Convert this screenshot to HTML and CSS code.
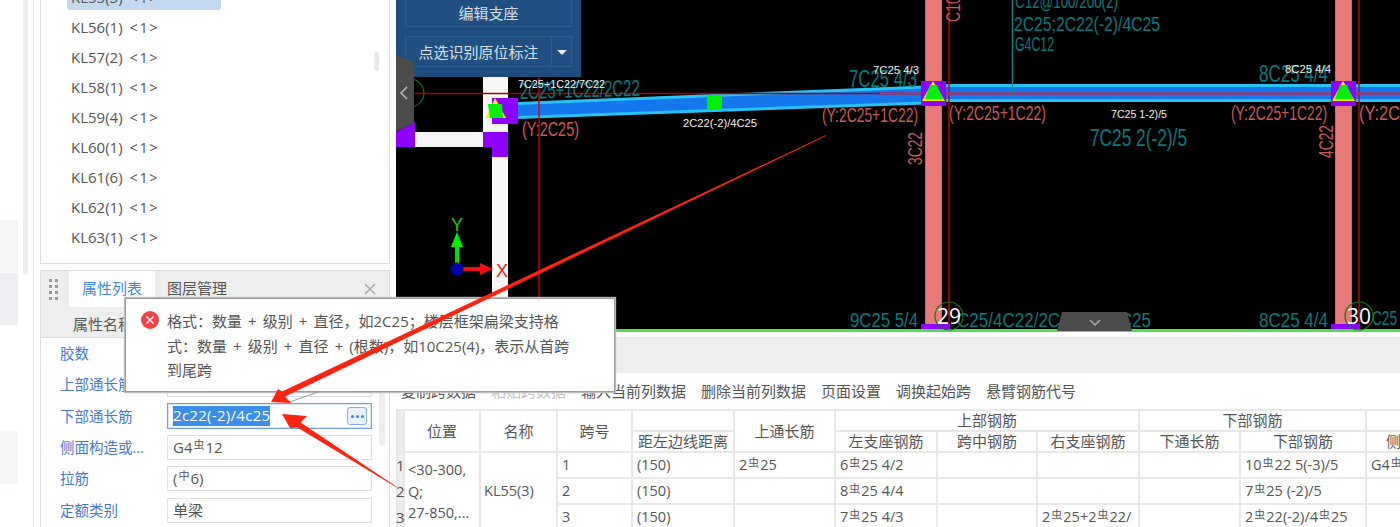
FILE: index.html
```html
<!DOCTYPE html>
<html lang="zh">
<head>
<meta charset="utf-8">
<title>KL55</title>
<link rel="stylesheet" href="styles.css">
</head>
<body>
<div class="app">
  <aside class="gutter">
    <div class="gutter-scroll"></div>
    <div class="gutter-blocks">
      <div class="gb gb-a"></div>
      <div class="gb gb-b"></div>
      <div class="gb gb-gap"></div>
      <div class="gb gb-a"></div>
    </div>
  </aside>

  <section class="side">
    <div class="list-panel">
      <ul class="list">
        <li class="sel">KL55(3) <span class="ct">&lt;1&gt;</span></li>
        <li>KL56(1) <span class="ct">&lt;1&gt;</span></li>
        <li>KL57(2) <span class="ct">&lt;1&gt;</span></li>
        <li>KL58(1) <span class="ct">&lt;1&gt;</span></li>
        <li>KL59(4) <span class="ct">&lt;1&gt;</span></li>
        <li>KL60(1) <span class="ct">&lt;1&gt;</span></li>
        <li>KL61(6) <span class="ct">&lt;1&gt;</span></li>
        <li>KL62(1) <span class="ct">&lt;1&gt;</span></li>
        <li>KL63(1) <span class="ct">&lt;1&gt;</span></li>
        <li>KL64(1) <span class="ct">&lt;1&gt;</span></li>
      </ul>
      <div class="list-thumb"></div>
    </div>
    <div class="prop-panel">
      <div class="tabs">
        <div class="grip"><i></i><i></i><i></i><i></i><i></i><i></i><i></i><i></i></div>
        <div class="tab active">属性列表</div>
        <div class="tab second">图层管理</div>
        <svg class="close" viewBox="0 0 12 12" width="12" height="12"><path d="M1 1L11 11M11 1L1 11"/></svg>
      </div>
      <div class="prop-head">属性名称</div>
      <div class="prop-rows">
        <div class="prop-row"><span class="pl">胶数</span><span class="pv">2</span></div>
        <div class="prop-row"><span class="pl">上部通长筋</span><span class="pv">2<b class="rb">虫</b>25</span></div>
        <div class="prop-row"><span class="pl">下部通长筋</span><span class="pv focus"><span class="selected">2c22(-2)/4c25</span><span class="more"><i></i><i></i><i></i></span></span></div>
        <div class="prop-row"><span class="pl">侧面构造或...</span><span class="pv">G4<b class="rb">虫</b>12</span></div>
        <div class="prop-row"><span class="pl">拉筋</span><span class="pv">(<b class="rb">中</b>6)</span></div>
        <div class="prop-row"><span class="pl">定额类别</span><span class="pv">单梁</span></div>
      </div>
      <div class="prop-thumb"></div>
    </div>
  </section>

  <main class="main">
    <div class="canvas">
      <svg class="cad" viewBox="396 0 1004 332" width="1004" height="332">
        <!-- white walls -->
        <rect class="wall" x="483" y="70" width="25" height="70"/>
        <rect class="wall" x="415" y="132" width="75" height="15"/>
        <rect class="wall" x="492" y="140" width="16" height="192"/>
        <path class="purple" d="M396 132L415 122V147H396ZM483 132H508V157H492V147H483Z"/>
        <circle class="ring" cx="410" cy="93" r="14"/>
        <!-- columns -->
        <rect class="col" x="925.5" y="-2" width="16" height="336"/>
        <rect class="col" x="1335.5" y="-2" width="16" height="336"/>
        <!-- beam -->
        <path class="cyan" d="M518 102L925 85.5V104.5L518 119ZM925 84H1400V102H925Z"/>
        <path class="blue" d="M518 105L925 88.5V101.5L518 116ZM925 87H1400V99H925Z"/>
        <path class="redline" d="M415 93.5H1400"/>
        <path class="redv" d="M539 70V332M949 0V332M1359 0V332"/>
        <path class="redbeam" d="M880 93.5H1400"/>
        <path class="tealv" d="M1012.5 0V93"/>
        <rect class="green" x="707" y="95" width="15" height="15"/>
        <!-- nodes -->
        <rect class="purple" x="492" y="98" width="26" height="26"/>
        <path class="yellow" d="M495 98L486 118H506Z"/>
        <path class="green" d="M488 104H502L503 118H490Z"/>
        <rect class="purple" x="921" y="81" width="25" height="25"/>
        <path class="yellow" d="M933 81L922 101H945Z"/>
        <path class="green" d="M930 85H937L943 99H925Z"/>
        <rect class="purple" x="1331" y="81" width="25" height="25"/>
        <path class="yellow" d="M1343 81L1332 101H1355Z"/>
        <path class="green" d="M1340 85H1347L1353 99H1335Z"/>
        <!-- teal annotations -->
        <g class="teal">
          <text x="520" y="99" font-size="23" textLength="120" lengthAdjust="spacingAndGlyphs" transform="rotate(-1.5 520 99)">2C25+1C22/2C22</text>
          <text x="849" y="87" font-size="23" textLength="68" lengthAdjust="spacingAndGlyphs">7C25 4/3</text>
          <text x="1015" y="8" font-size="20" textLength="103" lengthAdjust="spacingAndGlyphs">C12@100/200(2)</text>
          <text x="1014" y="31" font-size="20" textLength="146" lengthAdjust="spacingAndGlyphs">2C25;2C22(-2)/4C25</text>
          <text x="1015" y="51" font-size="20" textLength="39" lengthAdjust="spacingAndGlyphs">G4C12</text>
          <text x="1259" y="82" font-size="23" textLength="69" lengthAdjust="spacingAndGlyphs">8C25 4/4</text>
          <text x="1090" y="146" font-size="23" textLength="97" lengthAdjust="spacingAndGlyphs">7C25 2(-2)/5</text>
          <text x="850" y="327" font-size="20" textLength="68" lengthAdjust="spacingAndGlyphs">9C25 5/4</text>
          <text x="957" y="327" font-size="20" textLength="194" lengthAdjust="spacingAndGlyphs">C25/4C22/2C22(-2)/4C25</text>
          <text x="1259" y="327" font-size="20" textLength="69" lengthAdjust="spacingAndGlyphs">8C25 4/4</text>
          <text x="1372" y="325" font-size="20" textLength="25" lengthAdjust="spacingAndGlyphs">C25</text>
        </g>
        <!-- pink annotations -->
        <g class="pink">
          <text x="522" y="136" font-size="21" textLength="57" lengthAdjust="spacingAndGlyphs">(Y:2C25)</text>
          <text x="822" y="122" font-size="21" textLength="96" lengthAdjust="spacingAndGlyphs">(Y:2C25+1C22)</text>
          <text x="949" y="120" font-size="21" textLength="97" lengthAdjust="spacingAndGlyphs">(Y:2C25+1C22)</text>
          <text x="1231" y="120" font-size="21" textLength="96" lengthAdjust="spacingAndGlyphs">(Y:2C25+1C22)</text>
          <text x="1359" y="120" font-size="21" textLength="41" lengthAdjust="spacingAndGlyphs">(Y:2C</text>
          <text x="922" y="165" font-size="20" textLength="33" lengthAdjust="spacingAndGlyphs" transform="rotate(-90 922 165)">3C22</text>
          <text x="1333" y="158" font-size="20" textLength="33" lengthAdjust="spacingAndGlyphs" transform="rotate(-90 1333 158)">4C22</text>
          <text x="960" y="22" font-size="20" textLength="26" lengthAdjust="spacingAndGlyphs" transform="rotate(-90 960 22)">C10</text>
        </g>
        <!-- white small annotations -->
        <g class="wtext">
          <text x="518" y="88" font-size="10.5" textLength="87" lengthAdjust="spacingAndGlyphs">7C25+1C22/7C22</text>
          <text x="683" y="127" font-size="10.5" textLength="74" lengthAdjust="spacingAndGlyphs">2C22(-2)/4C25</text>
          <text x="873" y="74" font-size="10.5" textLength="46" lengthAdjust="spacingAndGlyphs">7C25 4/3</text>
          <text x="1285" y="73" font-size="10.5" textLength="46" lengthAdjust="spacingAndGlyphs">8C25 4/4</text>
          <text x="1111" y="118" font-size="10.5" textLength="56" lengthAdjust="spacingAndGlyphs">7C25 1-2)/5</text>
        </g>
        <!-- axis -->
        <path class="ax-g" d="M457 269V243"/>
        <path class="green" d="M457 232L463 247H451Z"/>
        <path class="ax-r" d="M463 269H482"/>
        <path class="ax-rf" d="M493 269L480 263V275Z"/>
        <circle class="ax-b" cx="457" cy="269" r="6.5"/>
        <text class="ax-yt" x="451" y="231" font-size="18" textLength="12" lengthAdjust="spacingAndGlyphs">Y</text>
        <text class="ax-xt" x="496" y="277" font-size="18" textLength="12" lengthAdjust="spacingAndGlyphs">X</text>
        <!-- bottom edge and grid bubbles -->
        <rect class="purple" x="921" y="324" width="29" height="6"/>
        <rect class="purple" x="1331" y="324" width="29" height="6"/>
        <rect class="edge" x="396" y="329" width="1004" height="3"/>
        <circle class="ring" cx="949" cy="316" r="14"/>
        <circle class="ring" cx="1359" cy="316" r="14"/>
        <text class="bub" x="937" y="324" font-size="21">29</text>
        <text class="bub" x="1347" y="324" font-size="21">30</text>
        <!-- collapse tab -->
        <path class="handle" d="M1057 331L1062 312H1127L1132 331Z"/>
        <path class="chev" d="M1090 320L1095 325L1100 320"/>
      </svg>

      <div class="tool-panel">
        <div class="tbtn wide">编辑支座</div>
        <div class="tsplit"><div class="tbtn grow">点选识别原位标注</div><div class="tbtn drop"><i></i></div></div>
      </div>
      <svg class="side-handle" viewBox="0 0 20 78" width="20" height="78">
        <path class="handle" d="M0 0L19 7V68L0 77Z"/>
        <path class="chev2" d="M12 32L6 38L12 44"/>
      </svg>
    </div>

    <div class="gray-band"></div>
    <div class="toolbar">
      <span>复制跨数据</span><span class="off">粘贴跨数据</span><span>输入当前列数据</span><span>删除当前列数据</span><span>页面设置</span><span>调换起始跨</span><span>悬臂钢筋代号</span>
    </div>
    <table class="grid">
      <colgroup>
        <col class="c0"><col class="c1"><col class="c2"><col class="c3"><col class="c4"><col class="c5"><col class="c6"><col class="c7"><col class="c8"><col class="c9"><col class="c10"><col class="c11">
      </colgroup>
      <thead>
        <tr class="h1">
          <th class="rh" rowspan="2"></th><th rowspan="2">位置</th><th rowspan="2">名称</th><th rowspan="2">跨号</th><th></th><th rowspan="2">上通长筋</th><th colspan="3">上部钢筋</th><th colspan="2">下部钢筋</th><th></th>
        </tr>
        <tr class="h2">
          <th>距左边线距离</th><th>左支座钢筋</th><th>跨中钢筋</th><th>右支座钢筋</th><th>下通长筋</th><th>下部钢筋</th><th>侧面钢筋</th>
        </tr>
      </thead>
      <tbody>
        <tr><td class="rh">1</td><td class="pos" rowspan="3">&lt;30-300,<br>Q;<br>27-850,...</td><td class="nm" rowspan="3">KL55(3)</td><td>1</td><td>(150)</td><td>2<b class="rb">虫</b>25</td><td>6<b class="rb">虫</b>25 4/2</td><td></td><td></td><td></td><td>10<b class="rb">虫</b>22 5(-3)/5</td><td>G4<b class="rb">虫</b>12</td></tr>
        <tr><td class="rh">2</td><td>2</td><td>(150)</td><td></td><td>8<b class="rb">虫</b>25 4/4</td><td></td><td></td><td></td><td>7<b class="rb">虫</b>25 (-2)/5</td><td></td></tr>
        <tr><td class="rh">3</td><td>3</td><td>(150)</td><td></td><td>7<b class="rb">虫</b>25 4/3</td><td></td><td>2<b class="rb">虫</b>25+2<b class="rb">虫</b>22/</td><td></td><td>2<b class="rb">虫</b>22(-2)/4<b class="rb">虫</b>25</td><td></td></tr>
      </tbody>
    </table>
  </main>
</div>

<div class="tooltip">
  <svg class="t-icon" viewBox="0 0 18 18" width="18" height="18"><circle class="t-c" cx="9" cy="9" r="9"/><path class="t-x" d="M5.5 5.5L12.5 12.5M12.5 5.5L5.5 12.5"/></svg>
  <p>格式：数量 + 级别 + 直径，如2C25；楼层框架扁梁支持格<br>式：数量 + 级别 + 直径 + (根数)，如10C25(4)，表示从首跨<br>到尾跨</p>
</div>

<svg class="marks" viewBox="0 0 1400 527" width="1400" height="527">
  <path class="tail" d="M287 403L318 392"/>
  <path class="arrow" d="M271 402L278 389L282 391.5L826 135L826.4 135.8L285 396.5L291 403Z"/>
  <path class="arrow" d="M282 414L307 416L300.6 422.5L397 487L396.6 487.6L297.4 427.5L290 428Z"/>
</svg>
</body>
</html>
```

FILE: styles.css
```css
* { box-sizing: border-box; }
html, body { margin: 0; padding: 0; height: 527px; overflow: hidden; background: #fff; }
body { font-family: "Open Sans", "Noto Sans CJK SC", sans-serif; color: #555; position: relative; }
.app { display: flex; width: 1400px; height: 527px; overflow: hidden; }

/* far-left gutter */
.gutter { width: 33px; flex: none; display: flex; position: relative; }
.gutter-blocks { width: 18px; padding-top: 220px; flex: none; }
.gb { height: 53px; }
.gb-a { background: #f5f6f8; }
.gb-b { background: #eceef2; height: 52px; }
.gb-gap { height: 106px; }
.gutter-scroll { position: absolute; left: 23px; top: 0; width: 5px; height: 275px; background: #ededed; border-radius: 0 0 3px 3px; }

/* sidebar */
.side { width: 363px; flex: none; border-left: 1px solid #e6e6e6; padding-left: 6px; display: flex; flex-direction: column; gap: 6px; }
.list-panel { width: 350px; height: 264px; flex: none; border: 1px solid #ddd; border-top: 0; overflow: hidden; position: relative; }
.list { list-style: none; margin: -18px 0 0; padding: 0 0 0 26px; }
.list li { height: 30px; line-height: 30px; font-size: 15px; padding-left: 4px; width: 154px; white-space: nowrap; }
.list li.sel { background: #c3d9f0; border-radius: 3px; height: 28px; margin-bottom: 2px; }
.ct { margin-left: 3px; font-size: 14.5px; letter-spacing: 1.6px; }
.list-thumb { position: absolute; left: 333px; top: 52px; width: 5px; height: 19px; background: #e8e8e8; border-radius: 2px; }

.prop-panel { width: 350px; flex: 1; border: 1px solid #ddd; border-bottom: 0; position: relative; }
.tabs { height: 36px; background: #eee; display: flex; align-items: center; position: relative; padding-left: 8px; }
.grip { width: 20px; display: grid; grid-template-columns: 3px 3px; gap: 3px; flex: none; }
.grip i { width: 3px; height: 3px; background: #999; }
.tab { height: 36px; line-height: 35px; font-size: 15px; width: 86px; text-align: center; color: #555; }
.tab.second { text-align: left; padding-left: 12px; }
.tab.active { background: #fff; color: #3b8ceb; }
.close { position: absolute; right: 13px; top: 12px; fill: none; stroke: #aaa; stroke-width: 1.5; }
.prop-head { height: 31px; background: #eee; border-bottom: 1px solid #ddd; padding-left: 32px; line-height: 34px; font-size: 15px; }
.prop-row { height: 31.33px; display: flex; align-items: center; padding-left: 19px; }
.pl { width: 107px; flex: none; font-size: 14.5px; color: #4678d2; white-space: nowrap; margin-top: -2px; }
.pv { width: 205px; height: 25px; border: 1px solid #e2e2e2; font-size: 15px; line-height: 23px; padding-left: 5px; display: flex; position: relative; white-space: pre; }
.pv.focus { border: 1px solid #6e9fe8; height: 26px; box-shadow: inset 0 0 0 1px #d7e5f8; }
.selected { background: #3b8eea; color: #fff; height: 20px; line-height: 19px; margin-top: 2px; letter-spacing: .3px; }
.more { position: absolute; right: 4px; top: 3px; width: 20px; height: 18px; border: 1px solid #82b0ea; border-radius: 3px; background: #e9f1fc; display: flex; align-items: center; justify-content: center; gap: 2px; }
.more i { width: 3px; height: 3px; background: #3b7fd6; border-radius: 50%; }
.prop-thumb { position: absolute; left: 338px; top: 120px; width: 6px; height: 55px; background: #ededed; border-radius: 3px; }
.rb { font-weight: 400; font-size: 11px; position: relative; top: -3px; margin: 0 1px; font-family: "Noto Sans CJK SC", sans-serif; }

/* main */
.main { width: 1004px; flex: none; display: flex; flex-direction: column; }
.canvas { height: 332px; background: #000; position: relative; flex: none; overflow: hidden; }
.cad { display: block; }
.cad text { font-family: "Liberation Sans Narrow", "Liberation Sans", sans-serif; }
.wall { fill: #f6f6f6; }
.purple { fill: #8f00ff; }
.ring { fill: none; stroke: #0b7a12; stroke-width: 1.2; }
.col { fill: #e87a7a; stroke: #1fb0a8; stroke-width: 1; }
.cyan { fill: #27c3f7; }
.blue { fill: #1577ee; }
.redline { stroke: #b00000; stroke-width: 1.5; fill: none; }
.redbeam { stroke: #b8305c; stroke-width: 2; fill: none; }
.redv { stroke: #d00000; stroke-width: 1.4; fill: none; }
.tealv { stroke: #0d8c8c; stroke-width: 1.2; fill: none; }
.green { fill: #00f000; }
.yellow { fill: #f4f000; }
.teal text { fill: #067a7c; }
.pink text { fill: #c85a58; }
.wtext text { fill: #f0f0f0; }
.ax-g { stroke: #00e000; stroke-width: 4; fill: none; }
.ax-r { stroke: #f01010; stroke-width: 4; fill: none; }
.ax-rf { fill: #f01010; }
.ax-b { fill: #0000a8; }
.ax-yt { fill: #10d010; }
.ax-xt { fill: #f02020; }
.edge { fill: #4fe04f; }
.bub { fill: #fff; }
.cad .bub { font-family: "Open Sans", sans-serif; }
.handle { fill: #4c4c4c; }
.chev { fill: none; stroke: #aaa; stroke-width: 1.5; }
.chev2 { fill: none; stroke: #bbb; stroke-width: 1.5; }

.tool-panel { position: absolute; left: -1px; top: -8px; width: 186px; height: 85px; background: #1f4d7e; padding: 0 9px 0 10px; display: flex; flex-direction: column; gap: 9px; }
.tbtn { background: #214f81; border: 1px solid #2c5d90; color: #d6e0ea; text-align: center; font-size: 15px; height: 35px; line-height: 40px; }
.tsplit { display: flex; height: 31px; }
.tbtn.grow { flex: 1; height: 31px; line-height: 31px; border-right: 0; }
.tbtn.drop { width: 21px; height: 31px; position: relative; }
.tbtn.drop i { position: absolute; left: 5px; top: 13px; border: 5px solid transparent; border-top-color: #e8eef4; border-bottom: 0; }
.side-handle { position: absolute; left: -1px; top: 55px; }

.gray-band { height: 36px; margin-top: 5px; background: #eeeef0; border-top: 1px solid #e4e4e4; flex: none; }
.toolbar { height: 36px; flex: none; display: flex; align-items: center; gap: 15px; padding: 0 0 2px 5px; font-size: 15px; white-space: nowrap; }
.toolbar .off { color: #c4c4c4; }

.grid { border-collapse: collapse; table-layout: fixed; width: 1069px; font-size: 14.5px; flex: none; }
.c0 { width: 7px; } .c1 { width: 76px; } .c2 { width: 77px; } .c3 { width: 75px; } .c4 { width: 102px; } .c5 { width: 101px; }
.c6 { width: 102px; } .c7 { width: 100px; } .c8 { width: 102px; } .c9 { width: 101px; } .c10 { width: 126px; } .c11 { width: 100px; }
.grid th, .grid td { border: 2px solid #e8e8e8; padding: 0 4px; overflow: hidden; white-space: nowrap; font-weight: 400; line-height: 20px; }
.grid th { text-align: center; font-size: 15px; padding: 0; line-height: 17px; height: 21px; }
.grid tbody tr { height: 26px; }
.grid td { height: 26px; }
.grid .rh { background: #eee; padding: 0; text-indent: -2px; text-align: left; font-size: 15px; overflow: visible; }
.grid .pos { line-height: 21.5px; vertical-align: top; padding: 6px 0 0 3px; }
.grid .nm { text-align: left; padding-left: 3px; }

/* tooltip and annotation arrows lie over the page */
.tooltip { position: absolute; left: 125px; top: 298px; width: 490px; height: 94px; background: #fff; border: 1px solid #9a9a9a; box-shadow: 0 0 1px 1px #bbb; padding: 10px 0 0 41px; }
.tooltip p { margin: 0; font-size: 15px; line-height: 24.5px; white-space: nowrap; word-spacing: 2.2px; }
.t-icon { position: absolute; left: 15px; top: 12px; }
.t-c { fill: #ef4348; }
.t-x { stroke: #fff; stroke-width: 1.4; fill: none; }
.marks { position: absolute; left: 0; top: 0; pointer-events: none; }
.arrow { fill: #ff2410; }
.tail { fill: none; stroke: #999; stroke-width: 1; }
```
